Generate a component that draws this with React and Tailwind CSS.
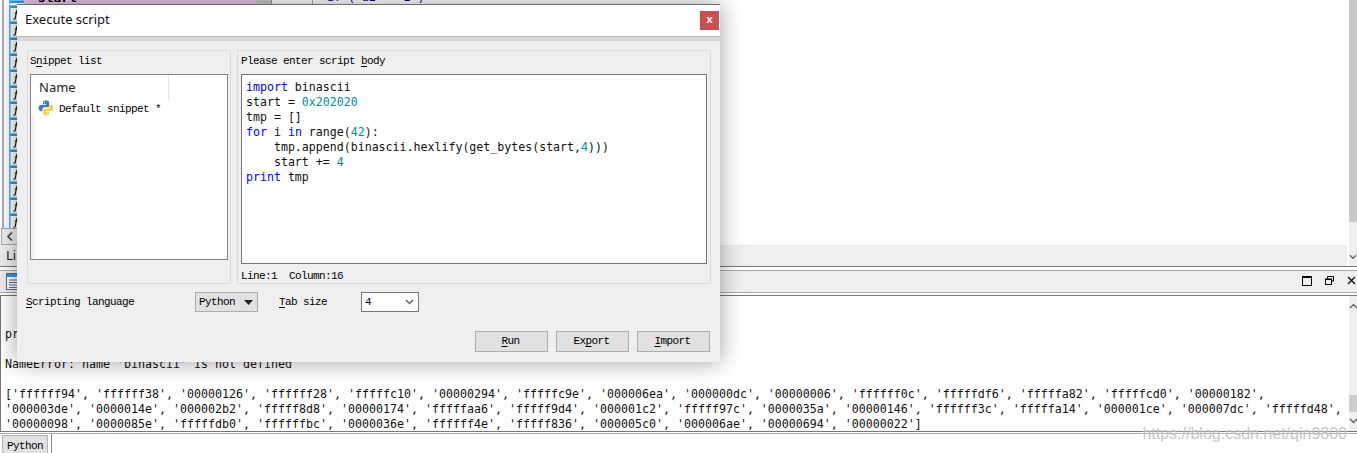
import React from "react";

const sim = { fontFamily: '"Liberation Mono", monospace' };
const mono = { fontFamily: '"DejaVu Sans Mono", monospace' };
const ui = { fontFamily: '"Noto Sans", sans-serif' };

function Bm({ children, className = "" }) {
  return (
    <span style={sim} className={`text-[11px] tracking-[-0.6px] text-[#000] whitespace-pre ${className}`}>
      {children}
    </span>
  );
}

function U({ children }) {
  return <span className="underline underline-offset-2">{children}</span>;
}

function FnIcon() {
  return (
    <svg width="16" height="16" viewBox="0 0 16 16" className="shrink-0">
      <rect x="0.5" y="1" width="15" height="14" fill="#fff" />
      <rect x="0" y="0" width="16" height="1" fill="#7cc4f5" />
      <rect x="0" y="1" width="16" height="2" fill="#2f9be8" />
      <rect x="0" y="0" width="1.5" height="16" fill="#5ab0ee" />
      <path d="M9.5 5.5c-1-.6-1.8-.2-2 1L6.3 13c-.2 1-.9 1.4-1.8 1M5.8 8h3" stroke="#111" strokeWidth="1.2" fill="none" />
    </svg>
  );
}

function PyIcon() {
  return (
    <svg width="16" height="16" viewBox="0 0 16 16" className="shrink-0">
      <path d="M8 .6C5.2.6 5 1.8 5 2.8v1.5h3.2v.6H3.1C1.6 4.9.6 6.1.6 8s1 3.2 2.4 3.2h1.4V9.4c0-1.3 1-2.2 2.2-2.2h2.8c1 0 1.8-.8 1.8-1.8V2.8C11.2 1.5 9.9.6 8 .6z" fill="#3f7cb0" />
      <path d="M8 15.4c2.8 0 3-1.2 3-2.2v-1.5H7.8v-.6h5.1c1.5 0 2.5-1.2 2.5-3.1s-1-3.2-2.4-3.2h-1.4v1.8c0 1.3-1 2.2-2.2 2.2H7c-1 0-1.8.8-1.8 1.8v2.6c0 1.3 1.3 2.2 2.8 2.2z" fill="#f8d044" />
      <circle cx="6.5" cy="2.6" r=".7" fill="#fff" />
      <circle cx="9.5" cy="13.4" r=".7" fill="#fff" />
    </svg>
  );
}

function Chevron({ dir = "down" }) {
  const d = dir === "down" ? "M1 1l3.5 3.5L8 1" : "M1 5l3.5-3.5L8 5";
  return (
    <svg width="9" height="6" viewBox="0 0 9 6">
      <path d={d} stroke="#666" strokeWidth="1.5" fill="none" />
    </svg>
  );
}

function Btn({ children }) {
  return (
    <div className="w-[73px] h-[21px] bg-[#e1e1e1] border border-[#adadad] flex items-center justify-center pr-[2px]">
      <Bm>{children}</Bm>
    </div>
  );
}

const K = ({ children }) => <span className="text-[#0000ff]">{children}</span>;
const N = ({ children }) => <span className="text-[#00909a]">{children}</span>;

const out1 =
  "['ffffff94', 'ffffff38', '00000126', 'ffffff28', 'fffffc10', '00000294', 'fffffc9e', '000006ea', '000000dc', '00000006', 'ffffff0c', 'fffffdf6', 'fffffa82', 'fffffcd0', '00000182',";
const out2 =
  "'000003de', '0000014e', '000002b2', 'fffff8d8', '00000174', 'fffffaa6', 'fffff9d4', '000001c2', 'fffff97c', '0000035a', '00000146', 'ffffff3c', 'fffffa14', '000001ce', '000007dc', 'fffffd48',";
const out3 =
  "'00000098', '0000085e', 'fffffdb0', 'ffffffbc', '0000036e', 'ffffff4e', 'fffff836', '000005c0', '000006ae', '00000694', '00000022']";

function Dialog() {
  return (
    <div className="absolute left-[17px] top-[4px] w-[703px] h-[358px] bg-[#efefef] border-t border-[#6e6e6e] flex flex-col shadow-[0_0_22px_rgba(0,0,0,0.38)]">
      <div className="h-[31px] bg-white flex items-center justify-between shrink-0">
        <span style={ui} className="pl-[8px] pb-[2px] text-[13px] text-[#111]">Execute script</span>
        <div className="w-[19px] h-[19px] mr-[1px] bg-[#c75050] flex items-center justify-center">
          <span style={sim} className="text-white text-[11px] font-bold leading-none">x</span>
        </div>
      </div>
      <div className="h-[5px] shrink-0 bg-[#d9d9d9] border-t border-[#b4b4b4]" />
      <div className="flex gap-[6px] pl-[10px] pt-[9px] shrink-0">
        <div className="w-[204px] h-[234px] border border-[#dcdcdc] flex flex-col">
          <div className="h-[23px] shrink-0 pl-[2px] pb-[2px] flex items-center"><Bm>S<U>n</U>ippet list</Bm></div>
          <div className="mx-[2px] w-[198px] h-[186px] shrink-0 bg-white border border-[#82828a] flex">
            <div className="w-[4px] bg-[#f3f3f3] mt-[41px]" />
            <div className="flex-1 flex flex-col">
              <div className="h-[25px] flex">
                <div className="w-[134px] h-[25px] border-r border-[#e5e5e5] pl-[4px] flex items-center">
                  <span style={ui} className="text-[13px] text-[#222]">Name</span>
                </div>
              </div>
              <div className="flex items-center gap-[6px] pl-[3px] h-[16px]">
                <PyIcon />
                <Bm className="pt-[2px] -ml-[1px]">Default snippet *</Bm>
              </div>
            </div>
          </div>
        </div>
        <div className="w-[474px] h-[234px] border border-[#dcdcdc] flex flex-col">
          <div className="h-[23px] shrink-0 pl-[3px] pb-[2px] flex items-center"><Bm>Please enter script <U>b</U>ody</Bm></div>
          <div style={mono} className="ml-[3px] w-[466px] h-[190px] shrink-0 bg-white border border-[#777] pl-[4px] pt-[5px] text-[11.6px] leading-[15px] text-[#111] whitespace-pre">
            <div><K>import</K> binascii</div>
            <div>start = <N>0x202020</N></div>
            <div>tmp = []</div>
            <div><K>for</K> i <K>in</K> range(<N>42</N>):</div>
            <div>    tmp.append(binascii.hexlify(get_bytes(start,<N>4</N>)))</div>
            <div>    start += <N>4</N></div>
            <div><K>print</K> tmp</div>
          </div>
          <div className="pl-[3px] h-[19px] flex items-center pt-[5px]"><Bm>Line:1  Column:16</Bm></div>
        </div>
      </div>
      <div className="flex items-center pl-[9px] pt-[8px] shrink-0">
        <Bm className="w-[169px]"><U>S</U>cripting language</Bm>
        <div className="w-[63px] h-[20px] bg-[#e1e1e1] border border-[#adadad] flex items-center justify-between pl-[3px] pr-[4px]">
          <Bm>Python</Bm>
          <svg width="9" height="5" viewBox="0 0 9 5"><path d="M0 0h9L4.5 5z" fill="#222" /></svg>
        </div>
        <Bm className="ml-[21px] w-[82px]"><U>T</U>ab size</Bm>
        <div className="w-[58px] h-[20px] bg-white border border-[#777] flex items-center justify-between pl-[3px] pr-[4px]">
          <Bm>4</Bm>
          <Chevron />
        </div>
      </div>
      <div className="flex justify-end gap-[8px] pr-[10px] pt-[19px]">
        <Btn><U>R</U>un</Btn>
        <Btn>Ex<U>p</U>ort</Btn>
        <Btn><U>I</U>mport</Btn>
      </div>
    </div>
  );
}

export default function App() {
  return (
    <div className="relative w-[1357px] h-[453px] overflow-hidden bg-white flex flex-col">
      <div className="flex h-[266px] shrink-0">
        <div className="flex-1 flex flex-col">
          <div className="flex h-[245px]">
            <div className="w-[272px] flex flex-col border-r border-[#999]">
              <div className="flex h-[228px]">
                <div className="w-[2px] ml-[2px] bg-[#a9aebb]" />
                <div className="flex-1 flex flex-col pl-[5px]">
                  <div className="h-[4px] flex overflow-hidden">
                    <div className="w-[15px]"><FnIcon /></div>
                    <div className="flex-1 bg-[#e8c6e6] pl-[6px] overflow-hidden">
                      <div style={mono} className="text-[13px] font-bold leading-none text-black -mt-[9px]">_start</div>
                    </div>
                    <div className="w-[15px] bg-[#c8c8c8]" />
                  </div>
                  {Array.from({ length: 14 }).map((_, i) => (
                    <div key={i} className="h-[16px] pt-[1px]"><FnIcon /></div>
                  ))}
                </div>
              </div>
              <div className="h-[17px] flex">
                <div className="w-[17px] ml-[1px] bg-[#eee] border border-[#aaa] flex items-center justify-center">
                  <svg width="6" height="9" viewBox="0 0 6 9"><path d="M5 .5L1 4.5l4 4" stroke="#444" strokeWidth="1.6" fill="none" /></svg>
                </div>
              </div>
            </div>
            <div className="flex-1 flex">
              <div className="w-[41px] border-r border-[#aaa] h-[4px]" />
              <div style={mono} className="h-[4px] overflow-hidden pl-[14px]">
                <div className="text-[11.6px] leading-none text-[#000080] -mt-[8px]">if ( a2 == 2 )</div>
              </div>
            </div>
          </div>
          <div className="h-[21px] bg-[#efefef] mr-[2px] rounded-br-[3px] pl-[6px] flex items-center">
            <span style={ui} className="text-[13px] text-[#222]">Line 1 of 42</span>
          </div>
        </div>
        <div className="w-[8px] flex flex-col bg-[#efefef]">
          <div className="h-[222px] bg-[#c8c8c8]" />
          <div className="flex-1 flex items-end pb-[6px] overflow-hidden">
            <Chevron />
          </div>
        </div>
      </div>

      <div className="h-[30px] shrink-0 flex flex-col border-y border-[#777] pt-[3px] pb-[2px]">
        <div className="flex-1 bg-[#efefef] border-y border-[#aaa] flex items-center pl-[6px] pr-[1px] justify-between">
          <svg width="16" height="17" viewBox="0 0 16 17">
            <rect x=".5" y=".5" width="15" height="16" fill="#fff" stroke="#5a6e86" />
            <rect x="1" y="1" width="14" height="3" fill="#2f9be8" />
            <path d="M3 7h10M3 9.5h10M3 12h10M3 14.5h10" stroke="#5a6e86" />
          </svg>
          <div className="flex items-center gap-[13px] pb-[2px]">
            <svg width="10" height="10" viewBox="0 0 10 10"><rect x=".5" y=".5" width="9" height="9" fill="none" stroke="#000" /><path d="M0 1h10" stroke="#000" strokeWidth="2" /></svg>
            <svg width="9" height="9" viewBox="0 0 9 9"><path d="M2.5 2.5V.5h6v4.5h-2" fill="none" stroke="#000" /><rect x=".5" y="3" width="6" height="5.5" fill="#efefef" stroke="#000" /><path d="M1 3.5h5" stroke="#000" /></svg>
            <svg width="9" height="9" viewBox="0 0 9 9"><path d="M1 1l7 7M8 1L1 8" stroke="#000" strokeWidth="1.2" /></svg>
          </div>
        </div>
      </div>

      <div className="flex h-[135px] shrink-0 border-l border-[#777]">
        <div style={mono} className="flex-1 pl-[4px] text-[11.63px] leading-[15px] text-[#111] whitespace-pre overflow-hidden">
          <div className="h-[31px]" />
          <div>print tmp</div>
          <div className="h-[15px]" />
          <div>NameError: name 'binascii' is not defined</div>
          <div className="h-[15px]" />
          <div>{out1}</div>
          <div>{out2}</div>
          <div>{out3}</div>
        </div>
        <div className="w-[8px] bg-[#f0f0f0] flex flex-col overflow-hidden">
          <div className="h-[99px] pt-[7px]"><Chevron dir="up" /></div>
          <div className="h-[17px] bg-[#cdcdcd]" />
          <div className="flex-1 pt-[6px]"><Chevron /></div>
        </div>
      </div>

      <div className="flex-1 flex flex-col border-t border-[#777]">
        <div className="h-[2px] border-b border-[#aaa]" />
        <div className="flex-1 flex pl-[2px]">
          <div className="w-[46px] mt-[1px] pt-[2px] bg-[#e1e1e1] border border-[#b4b4b4] border-b-0 flex items-center justify-center">
            <Bm>Python</Bm>
          </div>
          <div className="flex-1 ml-[3px] bg-white border-l border-[#888]" />
        </div>
      </div>

      <Dialog />

      <div className="absolute right-[10px] top-[424px] text-[16px] leading-[20px] text-[#b9b9b9] opacity-80 [font-family:'Liberation_Sans',sans-serif] [text-shadow:0_0_2px_#fff]">
        https://blog.csdn.net/qin9800
      </div>
    </div>
  );
}
